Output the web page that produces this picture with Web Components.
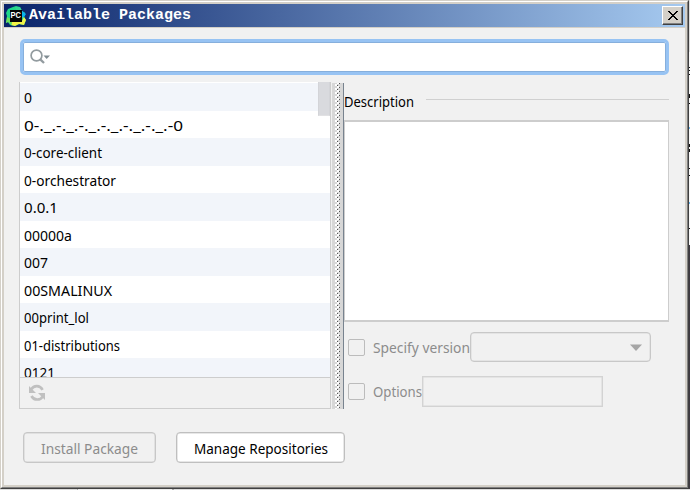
<!DOCTYPE html>
<html lang="en"><head><meta charset="utf-8"><title>Available Packages</title>
<style>html,body{margin:0;width:690px;height:490px;overflow:hidden;background:#f8f8f8}</style></head>
<body><package-dialog></package-dialog>
<script>
const define=(name,html,init)=>customElements.define(name,class extends HTMLElement{
  connectedCallback(){
    if(this.shadowRoot)return;
    this.attachShadow({mode:'open'}).innerHTML=html;
    if(init)init(this,this.shadowRoot);
  }
});

/* Text condensed or expanded to a given width */
define('fit-text',`<style>:host{display:block;white-space:pre;line-height:20px;height:20px;font:15px/20px "Noto Sans","Open Sans",sans-serif;flex:none}
span{display:inline-block;transform-origin:0 50%}</style><span><slot></slot></span>`,(el,root)=>{
  const w=+el.getAttribute('w'),s=root.querySelector('span');
  el.style.width=w+'px';
  s.style.transform='scaleX('+w/s.getBoundingClientRect().width+')';
});

define('app-logo',`<style>:host{display:block;width:20px;height:20px}svg{display:block}</style>
<svg width="20" height="20" viewBox="0 0 20 20"><path d="M2 3L7 1L10 0L14 1L16 5L19 7L18 11L20 14L18 19L13 18L9 20L4 19L2 16L0 17L1 10L0 7Z" fill="#21d789"/><path d="M14 1L16 5L19 7L18 11L14 14L9 1Z" fill="#35d592"/><path d="M16 5L20 8L18 11L15 11Z" fill="#08b4ef"/><path d="M18 11L20 14L18 19L13 18L9 20L5 19L6 15L16 15Z" fill="#f4f447"/><path d="M1 11L5 13L6 19L2 16L0 17Z" fill="#6fdf5b"/><path d="M4 4H16V16H4Z" fill="#050505"/><text x="4.4" y="11.5" fill="#fff" font-family="Liberation Sans,sans-serif" font-weight="bold" font-size="8.5" textLength="10.5" lengthAdjust="spacingAndGlyphs">PC</text></svg>`);

define('title-bar',`<style>:host{display:flex;height:23px;flex:none;align-items:center;padding:0 2px;box-sizing:border-box;background:linear-gradient(90deg,#0a246a,#a6caf0);border-bottom:0;color:#fff}
b{font:bold 15px/23px "Liberation Mono",monospace;margin-left:3px;flex:1;white-space:pre}
button{width:21px;height:19px;padding:0;border:1px solid;border-color:#fff #404040 #404040 #fff;box-shadow:inset -1px -1px #808080;background:#d4d0c8;display:grid;place-items:center}</style>
<app-logo></app-logo><b><slot></slot></b><button aria-label="Close"><svg width="10" height="9" viewBox="0 0 10 9" shape-rendering="crispEdges"><path d="M0 0h2v1h1v1h1v1h2V2h1V1h1V0h2v1H9v1H8v1H7v1H6v1h1v1h1v1h1v1h1v1H8V8H7V7H6V6H4v1H3v1H2v1H0V8h1V7h1V6h1V5h1V4H3V3H2V2H1V1H0Z"/></svg></button>`);

define('search-field',`<style>:host{display:flex;align-items:center;height:36px;box-sizing:border-box;border:3px solid #97c3f3;border-radius:5px;background:#fff;box-shadow:inset 0 0 0 1px #86afdc;padding-left:6px}</style>
<svg width="22" height="18" viewBox="0 0 22 18"><circle cx="7.5" cy="7.5" r="5.4" fill="none" stroke="#929b9f" stroke-width="1.7"/><path d="M11 11.2L15 15" stroke="#929b9f" stroke-width="2.3"/><path d="M14.5 7.5H21L17.7 11Z" fill="#7f8b91"/></svg>`);

define('package-row',`<style>:host{display:flex;align-items:center;height:28px;flex:none;padding-left:4px;background:#f2f5fa}:host(:nth-child(even)){height:27px;background:#fff}</style><slot></slot>`);

define('package-list',`<style>:host{display:flex;flex-direction:column;width:312px;height:327px;box-sizing:border-box;border:1px solid #cdcdcd;border-top:0;position:relative;background:#f1f1f1}
.rows{height:294px;overflow:hidden;border-top:1px solid #fff;border-bottom:1px solid #cdcdcd;display:flex;flex-direction:column;flex:none;background:#fff}
.thumb{position:absolute;right:0;top:0;width:12px;height:34px;box-sizing:border-box;background:#d9dade;border:1px solid #d3d4d8;border-top:0;border-bottom:1px solid #e1e1e3}
footer{display:flex;flex:1;align-items:center;padding-left:8px}</style>
<div class="rows"><slot></slot></div><div class="thumb"></div>
<footer><svg width="18" height="18" viewBox="0 0 18 18"><g fill="none" stroke="#c0c0c0" stroke-width="2.6"><path d="M3.2 5.4C5.8 1 12 1 14.6 5.8"/><path d="M14.8 12.3C12.2 16.7 6 16.7 3.4 12"/></g><path d="M1 2V9H8ZM17 16V9H10Z" fill="#c0c0c0"/></svg></footer>`);

define('split-bar',`<style>:host{display:block;width:12px;height:326px;margin:1px 0 0 1px;box-sizing:border-box;background:#d7d7d7;border-right:1px solid #78838f}svg{display:block}</style>
<svg width="11" height="326" shape-rendering="crispEdges"><defs><pattern id="dots" x="0" y="1" width="11" height="4" patternUnits="userSpaceOnUse"><path d="M3 0h2v2H3zM5 2h2v2H5z" fill="#fff"/><path d="M5 1h1v1H5zM7 3h1v1H7z" fill="#555"/></pattern></defs><rect width="11" height="326" fill="url(#dots)"/></svg>`);

define('section-heading',`<style>:host{display:flex;height:38px;gap:12px;align-items:center}i{height:1px;flex:1;background:#d0d0d0;margin-bottom:3px}</style><slot></slot><i></i>`);

define('text-area',`<style>:host{display:block;height:202px;box-sizing:border-box;background:#fff;border:1px solid #cdcdcd;border-width:2px 1px}</style>`);

define('check-option',`<style>:host{display:flex;align-items:center;height:30px;color:#8c8c8c}i{width:17px;height:17px;box-sizing:border-box;border:1px solid #bcbcbc;border-radius:2px;margin-right:8px}
.end{margin-left:auto}</style><i></i><slot></slot><slot class="end" name="control"></slot>`);

define('value-box',`<style>:host{display:flex;align-items:center;justify-content:flex-end;width:181px;height:31px;box-sizing:border-box;border:1px solid #d3d3d3;box-shadow:inset 0 0 0 .5px #d8d8d8;padding-right:8px}:host([menu]){height:30px;border-color:#c8c8c8;border-radius:4px}:host(:not([menu])) svg{display:none}</style><svg width="12" height="7"><path d="M0 .5H12L6 7Z" fill="#a6a6a6"/></svg>`);

define('push-button',`<style>:host{display:flex;width:169px;height:31px;box-sizing:border-box;align-items:center;justify-content:center;border:1px solid #bfbfbf;border-radius:4px;background:#fff;box-shadow:inset 0 0 0 .5px #d0d0d0;color:#000}:host([disabled]){width:133px;background:#f1f1f1;color:#8c8c8c;border-color:#c7c7c7}</style><slot></slot>`);

/* Slivers of the window behind the dialog */
define('backdrop-edge',`<style>:host{display:block;width:1px;height:490px}svg{display:block}</style><svg width="1" height="490" shape-rendering="crispEdges"><path d="M0 0h1v52H0zM0 245h1v245H0z" fill="#ddd"/><path d="M0 245h1v245H0z" fill="#3e3a42"/><path d="M0 67h1v1H0zM0 70h1v1H0zM0 74h1v1H0zM0 94h1v4H0zM0 103h1v1H0zM0 144h1v3H0zM0 149h1v3H0zM0 168h1v1H0zM0 175h1v1H0zM0 228h1v1H0z" fill="#111"/><path d="M0 127h1v2H0zM0 202h1v2H0z" fill="#6ab7ed"/></svg>`);

const rows=[['0',8],['0-._.-._.-._.-._.-._.-._.-0',159],['0-core-client',78],['0-orchestrator',92],['0.0.1',34],['00000a',48],['007',24],['00SMALINUX',88],['00print_lol',65],['01-distributions',96],['0121',31]];
define('package-dialog',`<style>
:host{display:grid;grid-template:489px 1px/689px 1px;width:690px;height:490px}
main{height:489px;box-sizing:border-box;border:1px solid;border-color:#d4d0c8 #404040 #404040 #d4d0c8;background:#f1f1f1}
.frame{height:487px;box-sizing:border-box;border:1px solid;border-color:#fff #808080 #808080 #fff}
.face{height:485px;box-sizing:border-box;border:2px solid #d4d0c8;display:flex;flex-direction:column}
.content{border-top:1px solid #d4d0c8;padding:11px 16px 0}
.middle{display:flex;height:327px;padding:7px 0 0;margin-left:-1px}
.right{width:326px}
.opts{padding:10px 3px 0 4px}
.opts check-option+check-option{margin-top:14px}
.actions{display:flex;gap:20px;margin:23px 0 0 3px}
footer{grid-column:1/3;background:linear-gradient(90deg,#ddd 0 77px,#aaa 77px 78px,#eee 78px 172px,#aaa 172px 174px,#ddd 174px)}
</style>
<main><div class="frame"><div class="face"><title-bar>Available Packages</title-bar>
<div class="content"><search-field></search-field>
<div class="middle"><package-list>${rows.map(([t,w])=>`<package-row><fit-text w="${w}">${t}</fit-text></package-row>`).join('')}</package-list><split-bar></split-bar>
<div class="right"><section-heading><fit-text w="70">Description</fit-text></section-heading><text-area></text-area>
<div class="opts"><check-option><fit-text w="97">Specify version</fit-text><value-box slot="control" menu></value-box></check-option><check-option><fit-text w="49">Options</fit-text><value-box slot="control"></value-box></check-option></div></div></div>
<div class="actions"><push-button disabled><fit-text w="97">Install Package</fit-text></push-button><push-button><fit-text w="134">Manage Repositories</fit-text></push-button></div>
</div></div></div></main><backdrop-edge></backdrop-edge><footer></footer>`);
</script></body></html>
